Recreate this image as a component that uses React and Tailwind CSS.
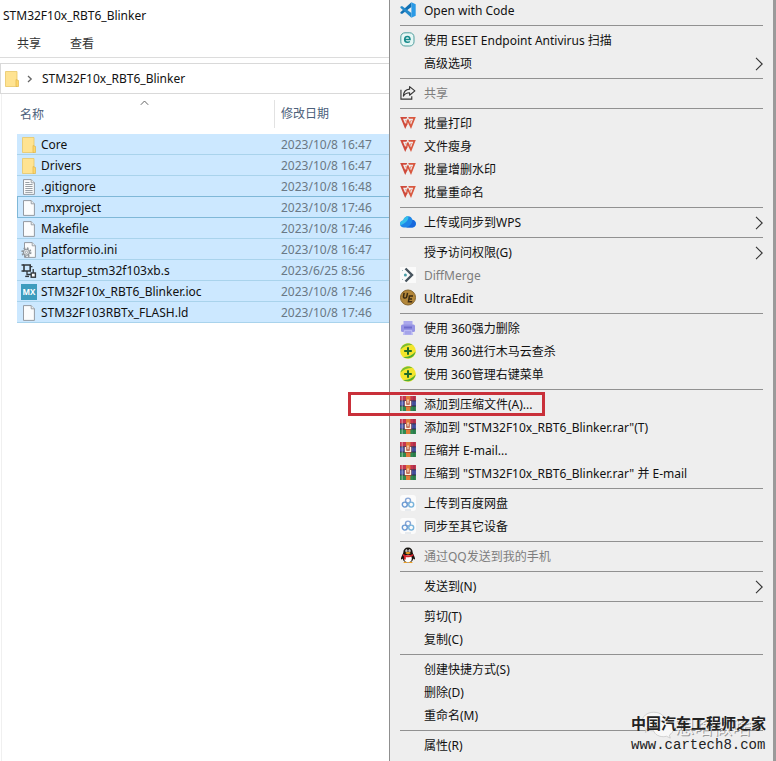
// src/App.jsx
import React from 'react';
import clsx from 'clsx';

const FolderIcon = () => (
  <svg width="14" height="16" viewBox="0 0 14 16">
    <path d="M0.5 0.5H12V15.5H0.5Z" fill="#ffe391" stroke="#e9c766" strokeWidth="0.8" />
    <path d="M11 8.5L13.5 9.5V15.5H11Z" fill="#ffd76a" stroke="#dfb64c" strokeWidth="0.7" />
  </svg>
);

const Sheet = ({ children }) => (
  <svg width="14" height="16" viewBox="0 0 14 16">
    <path d="M1.5 0.6H9.2L12.4 3.8V15.4H1.5Z" fill="#fbfcfd" stroke="#8a9097" strokeWidth="0.9" />
    <path d="M9.2 0.6V3.8H12.4" fill="#e8ecef" stroke="#8a9097" strokeWidth="0.8" />
    {children}
  </svg>
);

const TextIcon = () => (
  <Sheet>
    <path d="M3.3 5.5H10.6M3.3 7.5H10.6M3.3 9.5H10.6M3.3 11.5H10.6M3.3 13.4H10.6M3.3 3.5H7.5" stroke="#8d949b" strokeWidth="0.9" />
  </Sheet>
);

const IniIcon = () => (
  <svg width="16" height="16" viewBox="0 0 16 16">
    <path d="M3.5 0.6H11.2L14.4 3.8V15.4H3.5Z" fill="#fbfcfd" stroke="#8a9097" strokeWidth="0.9" />
    <path d="M11.2 0.6V3.8H14.4" fill="#e8ecef" stroke="#8a9097" strokeWidth="0.8" />
    <circle cx="5.4" cy="10.3" r="4.3" fill="none" stroke="#8f959a" strokeWidth="1.6" strokeDasharray="1.7 1.68" />
    <circle cx="5.4" cy="10.3" r="3" fill="#dfe3e6" stroke="#8f959a" strokeWidth="1.1" />
    <circle cx="5.4" cy="10.3" r="1.1" fill="#fff" stroke="#8f959a" strokeWidth="0.7" />
  </svg>
);

const AsmIcon = () => (
  <svg width="16" height="16" viewBox="0 0 16 16" fill="none" stroke="#33383d">
    <path d="M3 2H9.2V8H3Z" strokeWidth="1.6" />
    <path d="M0.5 2H3M9.2 3.6H11.4M0.5 8H3" strokeWidth="1.4" />
    <path d="M6 8V11.5H10M12.2 6V10" strokeWidth="1.3" />
    <rect x="10.2" y="10" width="4.2" height="4.2" fill="#fff" strokeWidth="1.4" />
    <path d="M4.2 13.4H8" strokeWidth="1.4" />
  </svg>
);

const MxIcon = () => (
  <span className="flex h-4 w-4 items-center justify-center bg-[#3d9cbe] font-['Open_Sans',sans-serif] text-[8px] font-bold text-white">MX</span>
);

const CodeIcon = () => (
  <svg width="16" height="16" viewBox="0 0 16 16">
    <path d="M0.4 10.2L11.4 0.3V5L2 12L0.4 11.2Z" fill="#1070b3" />
    <path d="M0.4 5.8L11.4 15.7V11L2 4L0.4 4.8Z" fill="#2489ca" />
    <path d="M11.4 0.3L15.7 2.3V13.7L11.4 15.7Z" fill="#2b9ae6" />
  </svg>
);

const EsetIcon = () => (
  <svg width="16" height="16" viewBox="0 0 16 16" fill="none">
    <rect x="0.8" y="0.8" width="13.2" height="13.2" rx="4.2" fill="#e6f7f5" stroke="#4f9e9d" strokeWidth="1" />
    <path d="M4.8 7.5H10C10 5.6 9 4.5 7.4 4.5S4.7 5.8 4.7 7.5S5.8 10.3 7.5 10.3C8.5 10.3 9.2 10 9.8 9.5" stroke="#16898a" strokeWidth="1.6" />
  </svg>
);

const ShareIcon = () => (
  <svg width="17" height="16" viewBox="0 0 17 16" fill="none" stroke="#333" strokeWidth="1.2">
    <path d="M1 4.5V14.5H12.5V11.5" />
    <path d="M10.2 1.2L15.8 5.8L10.2 10.4V7.7C7 7.7 5 8.8 3.6 11.3C3.8 7 6.3 4.2 10.2 3.9Z" strokeLinejoin="round" />
  </svg>
);

const WpsIcon = () => (
  <svg width="16" height="14" viewBox="0 0 16 14" fill="none">
    <path d="M0.2 1H7.2L6.4 2.8H3L5.2 8L7.4 3.2L8.6 5.8L5.2 13Z" fill="#cf4a3b" />
    <path d="M8.2 1H15.8L11 13L7 4.6L8 2.4L11 8.4L13.2 2.8H9Z" fill="#d9583f" />
    <path d="M5.6 4L7.8 8.4M11.4 4L9.8 7" stroke="#e9907c" strokeWidth="1.1" />
  </svg>
);

const CloudIcon = () => (
  <svg width="16" height="16" viewBox="0 0 16 16">
    <path d="M4 13.500C1.700 13.500 0 12 0 10C0 8 1.400 6.800 3.200 6.600C3.800 4 5.600 2.200 8.200 2.200C10.400 2.200 12 3.700 12.400 5.800C14.500 6.200 16 7.700 16 9.800C16 12 14.300 13.500 12 13.500Z" fill="#1e86e8" />
    <path d="M3.2 6.6C3.8 4 5.6 2.2 8.2 2.2C9 5 7 8.5 0.3 11.2C-0.5 8.8 1 6.9 3.2 6.6Z" fill="#35bfe9" />
    <path d="M6 13.5C9.5 12.5 12.4 9.8 12.4 5.8C16.5 6.6 17 12.6 12.5 13.5Z" fill="#1767dc" />
  </svg>
);

const DiffIcon = () => (
  <svg width="16" height="16" viewBox="0 0 16 16" fill="none">
    <rect width="16" height="16" fill="#fafafa" />
    <path d="M5.500 1.500L12 8L5.500 14.500" stroke="#47545e" strokeWidth="2.4" />
    <circle cx="5.4" cy="8" r="1.5" fill="#4a9fa8" />
    <path d="M2 3.5H3M2 12.5H3" stroke="#9fb9bd" />
  </svg>
);

const UltraIcon = () => (
  <svg width="17" height="17" viewBox="0 0 17 17" fill="none">
    <circle cx="8.5" cy="8.5" r="8" fill="#b3873a" stroke="#806029" />
    <path d="M4.4 3.6L3.7 7.4C3.5 9.6 6.8 9.8 7.2 7.6L8 3.6" stroke="#3a2a12" strokeWidth="1.6" />
    <path d="M13.8 7H10L9 13H13M9.5 10H12.8" stroke="#3a2a12" strokeWidth="1.6" />
  </svg>
);

const ShredIcon = () => (
  <svg width="16" height="16" viewBox="0 0 16 16">
    <path d="M3.5 1H12.5V6H3.500Z" fill="#aaa8ec" />
    <rect x="1" y="4.5" width="14" height="7.500" rx="1.5" fill="#9694e4" />
    <rect x="4" y="6.5" width="8" height="2" fill="#6f6ccc" />
    <path d="M4 10H12L13 15H3Z" fill="#b9b8f2" />
    <path d="M6 11V14.5M8 11V14.5M10 11V14.5" stroke="#8785dc" strokeWidth="0.8" />
  </svg>
);

const PlusIcon = () => (
  <svg width="16" height="16" viewBox="0 0 16 16">
    <circle cx="8" cy="8" r="7.8" fill="#f3e52c" />
    <path d="M0.5 6.5C1.8 1.2 8.5 -1.2 13 2.2C9 1.6 4.5 3 0.5 6.5Z" fill="#76bd33" />
    <path d="M15.6 8.4C14.6 14 8.5 17.3 3 13.9C8 14.2 12 12.4 15.6 8.4Z" fill="#50ad33" />
    <path d="M8 4.200V11.800M4.200 8H11.800" stroke="#1e6b2c" strokeWidth="2" />
  </svg>
);

const RarIcon = () => (
  <svg width="16" height="15" viewBox="0 0 16 15">
    <rect width="16" height="4.8" fill="#c5364f" />
    <rect y="4.800" width="16" height="5.200" fill="#4a58a8" />
    <rect y="10" width="16" height="5" fill="#2f8a50" />
    <path d="M0 4.8H16M0 10H16" stroke="#2c2440" strokeWidth="0.8" />
    <path d="M2.200 0V15" stroke="#fff" strokeOpacity="0.5" />
    <path d="M14 0V15" stroke="#1d1b33" strokeOpacity="0.3" />
    <rect x="6" width="4.4" height="15" fill="#e07b3a" />
    <path d="M4.6 5H11.4V10.800H4.6Z" fill="#b0492f" />
    <path d="M5.600 5V9.400H10.400V5" fill="none" stroke="#fff2e0" strokeWidth="1.4" />
    <path d="M8 3.500V7.500" stroke="#fff2e0" strokeWidth="1.2" />
  </svg>
);

const BaiduIcon = () => (
  <svg width="16" height="16" viewBox="0 0 16 16" fill="none">
    <rect width="16" height="16" rx="3" fill="#fbfbfb" />
    <circle cx="8" cy="5.6" r="2.5" stroke="#86a6d6" strokeWidth="1.4" />
    <circle cx="4.8" cy="9.6" r="2.5" stroke="#6c9ad2" strokeWidth="1.4" />
    <circle cx="11.2" cy="9.6" r="2.5" stroke="#79b4dc" strokeWidth="1.4" />
    <path d="M5 15H11" stroke="#c9d3dc" strokeWidth="0.8" />
  </svg>
);

const QqIcon = () => (
  <svg width="16" height="17" viewBox="0 0 16 17">
    <path d="M8 0.5C11 0.5 12.7 2.6 12.7 5.5C12.9 7 14.6 9 15 11.3C15.2 12.6 14.4 13 13.3 11.5C13 14 11 15.5 8 15.5S3 14 2.7 11.5C1.6 13 0.8 12.6 1 11.3C1.4 9 3.1 7 3.3 5.5C3.3 2.6 5 0.5 8 0.5Z" fill="#17130f" />
    <ellipse cx="8" cy="11.5" rx="3.8" ry="3.8" fill="#fff" />
    <ellipse cx="6.5" cy="3.8" rx="1.1" ry="1.5" fill="#fff" />
    <ellipse cx="9.5" cy="3.8" rx="1.1" ry="1.5" fill="#fff" />
    <circle cx="6.8" cy="4" r="0.5" fill="#111" />
    <circle cx="9.2" cy="4" r="0.5" fill="#111" />
    <ellipse cx="8" cy="6" rx="2.6" ry="0.9" fill="#f0a222" />
    <path d="M3 7C6 8.8 10 8.8 13 7L13.4 8.8C10 10.6 7 10.5 5.8 10.1V12.5H3.9V9.4L2.7 8.7Z" fill="#d3232b" />
    <path d="M3.5 15.2C5 14.2 7 14.6 7.5 16H3.6ZM12.5 15.2C11 14.2 9 14.6 8.5 16H12.4Z" fill="#f0a222" />
  </svg>
);

const ChevronIcon = () => (
  <svg width="8" height="14" viewBox="0 0 8 14" fill="none" stroke="#333" strokeWidth="1.1">
    <path d="M1 0.8L7.2 7L1 13.2" />
  </svg>
);

const files = [
  { name: 'Core', date: '2023/10/8 16:47', icon: FolderIcon },
  { name: 'Drivers', date: '2023/10/8 16:47', icon: FolderIcon },
  { name: '.gitignore', date: '2023/10/8 16:48', icon: TextIcon },
  { name: '.mxproject', date: '2023/10/8 17:46', icon: Sheet, focused: true },
  { name: 'Makefile', date: '2023/10/8 17:46', icon: Sheet },
  { name: 'platformio.ini', date: '2023/10/8 16:47', icon: IniIcon },
  { name: 'startup_stm32f103xb.s', date: '2023/6/25 8:56', icon: AsmIcon },
  { name: 'STM32F10x_RBT6_Blinker.ioc', date: '2023/10/8 17:46', icon: MxIcon },
  { name: 'STM32F103RBTx_FLASH.ld', date: '2023/10/8 17:46', icon: Sheet },
];

const menuGroups = [
  [{ label: 'Open with Code', icon: CodeIcon }],
  [{ label: '使用 ESET Endpoint Antivirus 扫描', icon: EsetIcon }, { label: '高级选项', submenu: true }],
  [{ label: '共享', icon: ShareIcon, disabled: true }],
  [
    { label: '批量打印', icon: WpsIcon },
    { label: '文件瘦身', icon: WpsIcon },
    { label: '批量增删水印', icon: WpsIcon },
    { label: '批量重命名', icon: WpsIcon },
  ],
  [{ label: '上传或同步到WPS', icon: CloudIcon, submenu: true }],
  [
    { label: '授予访问权限(G)', submenu: true },
    { label: 'DiffMerge', icon: DiffIcon, disabled: true },
    { label: 'UltraEdit', icon: UltraIcon },
  ],
  [
    { label: '使用 360强力删除', icon: ShredIcon },
    { label: '使用 360进行木马云查杀', icon: PlusIcon },
    { label: '使用 360管理右键菜单', icon: PlusIcon },
  ],
  [
    { label: '添加到压缩文件(A)...', icon: RarIcon, marked: true },
    { label: '添加到 "STM32F10x_RBT6_Blinker.rar"(T)', icon: RarIcon },
    { label: '压缩并 E-mail...', icon: RarIcon },
    { label: '压缩到 "STM32F10x_RBT6_Blinker.rar" 并 E-mail', icon: RarIcon },
  ],
  [{ label: '上传到百度网盘', icon: BaiduIcon }, { label: '同步至其它设备', icon: BaiduIcon }],
  [{ label: '通过QQ发送到我的手机', icon: QqIcon, disabled: true }],
  [{ label: '发送到(N)', submenu: true }],
  [{ label: '剪切(T)' }, { label: '复制(C)' }],
  [{ label: '创建快捷方式(S)' }, { label: '删除(D)' }, { label: '重命名(M)' }],
  [{ label: '属性(R)' }],
];

const Explorer = () => (
  <section className="flex min-w-0 flex-col overflow-hidden bg-white">
    <h1 className="h-8 pl-[3px] leading-8">STM32F10x_RBT6_Blinker</h1>
    <div className="flex h-[26px] gap-[29px] border-b border-[#dcdcdc] pl-[17px] text-[#333]">
      <button className="h-6">共享</button>
      <button className="h-6">查看</button>
    </div>
    <nav className="mt-[5px] flex h-[31px] items-center border border-r-0 border-[#d9d9d9] pl-1">
      <FolderIcon />
      <svg className="mx-2" width="7" height="8" viewBox="0 0 7 8" fill="none" stroke="#666" strokeWidth="1.3">
        <path d="M1 1L4.2 4L1 7" />
      </svg>
      <a href="#blinker">STM32F10x_RBT6_Blinker</a>
    </nav>
    <div className="ml-px flex-1 border-l border-[#f0f0f0] pl-[15px]">
      <table className="w-full table-fixed border-collapse">
        <thead>
          <tr className="h-10 text-left text-[#4c607a]">
            <th className="relative w-[257px] pl-[3px] pt-0.5 font-normal">
              名称
              <svg className="absolute left-[123px] top-1.5" width="9" height="6" viewBox="0 0 9 6" fill="none" stroke="#666">
                <path d="M0.8 4.8L4.5 1L8.2 4.8" />
              </svg>
            </th>
            <th className="font-normal">
              <span className="block border-l border-[#e2e2e2] pl-1.5 leading-7">修改日期</span>
            </th>
          </tr>
        </thead>
        <tbody>
          {files.map(({ name, date, icon: Icon, focused }) => (
            <tr
              key={name}
              className={clsx(
                'h-[21px] bg-[#cce8ff]',
                focused ? 'shadow-[inset_1px_0_0_#7fb8d8,inset_0_-1px_0_#7fb8d8,0_-1px_0_#7fb8d8]' : 'shadow-[inset_0_-1px_0_#a9d3ec]'
              )}
            >
              <td className="p-0">
                <div className="flex h-5 items-center gap-1 pl-1">
                  <span className="flex w-4 shrink-0 justify-center">
                    <Icon />
                  </span>
                  {name}
                </div>
              </td>
              <td className="whitespace-nowrap p-0 pl-[7px] text-[#6a7885]">{date}</td>
            </tr>
          ))}
        </tbody>
      </table>
    </div>
  </section>
);

const MenuItem = ({ label, icon: Icon, submenu, disabled, marked }) => (
  <li className="relative">
    <button
      disabled={disabled}
      className={clsx('flex h-[23px] w-full items-center whitespace-nowrap text-left', disabled && 'text-[#7d7d7d]')}
    >
      <span className="mr-2 flex w-4 shrink-0 justify-center pb-0.5">{Icon && <Icon />}</span>
      <span className="flex-1">{label}</span>
      {submenu && <ChevronIcon />}
    </button>
    {marked && <span className="pointer-events-none absolute -left-[52px] -top-px h-6 w-[197px] border-3 border-[#c9303a]" />}
  </li>
);

const ContextMenu = () => (
  <div className="relative min-w-0 border-l border-r-3 border-l-[#8f8f8f] border-r-[#9a9a9a] bg-[#eee] px-2.5">
    <div className="-mt-px">
      {menuGroups.map((group, i) => (
        <ul key={i} className={clsx(i > 0 && 'mt-[3px] border-t border-[#919191] pt-[3px]')}>
          {group.map((item) => (
            <MenuItem key={item.label} {...item} />
          ))}
        </ul>
      ))}
    </div>
  </div>
);

const Watermark = () => (
  <div className="absolute bottom-1.5 right-2.5 text-[#222]">
    <div className="absolute left-2.5 top-0 flex items-end text-[#f4f4f4]">
      <svg width="34" height="28" viewBox="0 0 32 26" fill="#f8f8f8" stroke="#c4c4c4" strokeWidth="0.7">
        <path d="M12 1C5.5 1 1 5 1 10C1 13 2.5 15 5 16.7L4 20L8 18C9.5 18.4 11 18.5 12 18.5C18.5 18.5 23 15 23 10S18.5 1 12 1Z" />
        <path d="M21 9C15.5 9 11.5 12.5 11.5 16.5S15.5 24 21 24C22 24 23 23.8 24 23.6L27.5 25.3L26.7 22.5C29 21 30.5 19 30.5 16.5C30.5 12.5 26.5 9 21 9Z" />
      </svg>
      <span className="text-[19px] leading-6 [text-shadow:1px_1px_0_#999]">想啥做啥</span>
    </div>
    <p className="relative font-['Noto_Sans_CJK_SC',sans-serif] text-[15px] font-bold leading-6">中国汽车工程师之家</p>
    <p className="relative font-['Liberation_Mono',monospace] text-[14px] leading-5">www.cartech8.com</p>
  </div>
);

const App = () => (
  <main className="relative grid min-h-screen grid-cols-[389fr_387fr] overflow-hidden font-['Noto_Sans','Noto_Sans_CJK_SC',sans-serif] text-[12px] leading-5 text-[#111]">
    <Explorer />
    <ContextMenu />
    <Watermark />
  </main>
);

export default App;
